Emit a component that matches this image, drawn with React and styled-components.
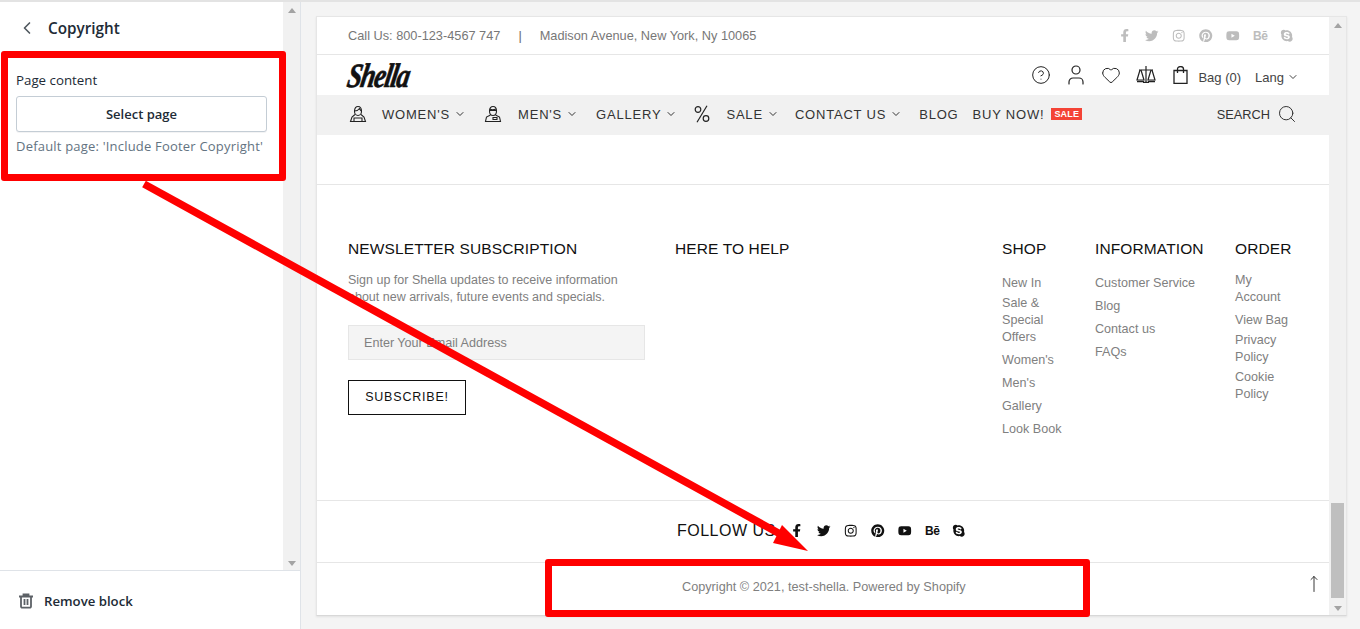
import React from "react";
import styled, { createGlobalStyle } from "styled-components";
import { ChevronLeft, ChevronDown, CircleHelp, User, Heart, Search, MoveUp } from "lucide-react";
import { FaFacebookF, FaTwitter, FaInstagram, FaPinterest, FaYoutube, FaSkype } from "react-icons/fa";

const Global = createGlobalStyle`
  html, body { margin: 0; padding: 0; height: 100%; overflow: hidden; background: #f4f4f4; }
  * { box-sizing: border-box; }
`;
const Page = styled.div`
  position: relative; width: 1360px; height: 629px; display: flex; background: #f4f4f4;
  border-top: 2px solid #e3e3e3; overflow: hidden;
`;
const Sidebar = styled.aside`
  width: 301px; height: 627px; background: #fff; border-right: 1px solid #dfe3e8;
  display: flex; flex-direction: column; font-family: "Open Sans", sans-serif; color: #212b36;
`;
const SideBody = styled.div`flex: 1; display: flex; min-height: 0;`;
const SideMain = styled.div`flex: 1; display: flex; flex-direction: column;`;
const SideHead = styled.div`
  height: 52px; display: flex; align-items: center; padding: 0 0 0 17px; gap: 11px;
  font-size: 15.3px; font-weight: 600; color: #212b36; svg { color: #50585f; }
`;
const SideSection = styled.div`padding: 16px 16px 0; display: flex; flex-direction: column;`;
const FieldLabel = styled.div`font-size: 13.3px; line-height: 20px; margin-bottom: 6px;`;
const SelectBtn = styled.button`
  height: 36px; border: 1px solid #c4cdd5; border-radius: 3px; background: #fff;
  font: 600 13px "Open Sans", sans-serif; color: #212b36; width: 251px; padding: 0;
  box-shadow: 0 1px 0 rgba(22,29,37,.05);
`;
const Help = styled.div`font-size: 13px; letter-spacing: .2px; line-height: 20px; color: #637381; margin-top: 4px; white-space: nowrap;`;
const Scrollbar = styled.div`
  width: ${p => p.$w}px; background: #f1f1f1; display: flex; flex-direction: column; justify-content: space-between;
  align-items: center; padding: 6px 0 4px; position: relative; flex: none;
`;
const ArrowUp = styled.i`width: 0; height: 0; border: 4px solid transparent; border-top: 0; border-bottom: 5px solid #a3a3a3;`;
const ArrowDown = styled.i`width: 0; height: 0; border: 4px solid transparent; border-bottom: 0; border-top: 5px solid #a3a3a3;`;
const Thumb = styled.div`position: absolute; left: 2px; right: 2px; bottom: 17px; height: 95px; background: #bfbfbf;`;
const SideFoot = styled.div`
  height: 59px; border-top: 1px solid #dfe3e8; display: flex; align-items: center; gap: 10px; padding: 2px 0 0 18px;
  font-size: 13.2px; font-weight: 600; color: #212b36;
`;
const Stage = styled.main`flex: 1; padding: 14px 0 0 15px;`;
const Frame = styled.div`
  width: 1031px; height: 600px; background: #fff; border: 1px solid #e6e6e6; border-bottom-color: #d8d8d8;
  display: flex; box-shadow: 0 1px 2px rgba(0,0,0,.08);
`;
const Shop = styled.div`flex: 1; font-family: "Liberation Sans", sans-serif; display: flex; flex-direction: column; min-width: 0;`;
const TopBar = styled.div`
  height: 38px; border-bottom: 1px solid #e6e6e6; padding: 0 35px 0 31px; display: flex; align-items: center;
  justify-content: space-between; font-size: 12.75px; color: #777;
`;
const Contact = styled.div`display: flex; align-items: center; white-space: nowrap;`;
const Sep = styled.span`margin: 0 18px; color: #666;`;
const Socials = styled.div`display: flex; align-items: center; gap: ${p => p.$gap}px; color: ${p => p.$color};`;
const Soc = styled.span`width: 14px; display: flex; justify-content: center; font-size: 13.5px;`;
const Behance = styled.span`font-size: 12px; font-weight: 700; width: 14px; line-height: 1; text-align: center; letter-spacing: -.5px;`;
const Header = styled.div`height: 40px; padding: 0 30px 0 31px; display: flex; align-items: center; justify-content: space-between;`;
const Logo = styled.div`
  font-family: "Liberation Serif", serif; font-style: italic; font-weight: 700; font-size: 31px; letter-spacing: -1.5px;
  color: #111; transform: skewX(-10deg) scale(.85, 1.1); transform-origin: left; line-height: 1;
  -webkit-text-stroke: .6px #111;
`;
const Tools = styled.div`display: flex; align-items: center; color: #222; font-size: 13px;`;
const Tool = styled.span`display: flex; width: 35px; justify-content: center; margin-top: -1px;`;
const Lang = styled.span`display: flex; align-items: center; gap: 3px; margin-left: 14px; color: #444; padding-top: 4px;`;
const Bag = styled.span`color: #444; padding-top: 4px;`;
const Nav = styled.nav`
  height: 40px; background: #f1f1f1; padding: 0 32px 2px 32px; display: flex; align-items: center;
  font-size: 13px; letter-spacing: 0.8px; color: #333; white-space: nowrap;
`;
const NavItem = styled.span`display: flex; align-items: center; gap: 4px; margin-right: ${p => p.$mr}px;`;
const NavIcon = styled.span`display: flex; margin-right: ${p => p.$mr}px; color: #222;`;
const SaleTag = styled.span`
  background: #f44336; color: #fff; font-size: 9px; font-weight: 700; line-height: 12px; padding: 0 3px; letter-spacing: .2px; margin-left: 3px;
`;
const SearchBox = styled.span`margin-left: auto; display: flex; align-items: center; gap: 7px; letter-spacing: 0; font-size: 12.8px;`;
const Spacer = styled.div`height: 50px; border-bottom: 1px solid #e6e6e6; flex: none;`;
const Columns = styled.div`
  height: 316px; border-bottom: 1px solid #e6e6e6; padding: 55px 0 0 31px; display: grid;
  grid-template-columns: 327px 327px 93px 140px 1fr; align-items: start;
`;
const Col = styled.div`display: flex; flex-direction: column;`;
const ColTitle = styled.h4`
  margin: 0; font-weight: 400; font-size: 15.5px; line-height: 18px; letter-spacing: .12px; color: #111; white-space: nowrap;
`;
const Para = styled.p`margin: 14px 0 0; font-size: 12.5px; line-height: 17px; color: #808080; width: 280px;`;
const EmailBox = styled.div`
  margin-top: 19px; width: 297px; height: 35px; background: #f4f4f4; border: 1px solid #e6e6e6;
  display: flex; align-items: center; padding-left: 15px; font-size: 12.6px; color: #808080;
`;
const SubBtn = styled.div`
  margin-top: 20px; width: 118px; height: 35px; border: 1px solid #111; display: flex; align-items: center; justify-content: center;
  font-size: 12.5px; letter-spacing: .8px; color: #111; padding-bottom: 2px;
`;
const Links = styled.ul`
  list-style: none; margin: ${p => p.$top}px 0 0; padding: 0; display: flex; flex-direction: column; gap: ${p => p.$gap}px;
`;
const Link = styled.li`font-size: 12.6px; line-height: 17px; color: #808080; width: ${p => p.$w}px; margin-bottom: ${p => p.$after || 0}px;`;
const Follow = styled.div`
  height: 62px; border-bottom: 1px solid #e6e6e6; display: flex; align-items: center; padding: 0 0 2px 360px; gap: 13px;
`;
const FollowText = styled.span`font-size: 16px; letter-spacing: .5px; color: #111; white-space: nowrap; width: 100px;`;
const Copy = styled.div`
  flex: 1; display: flex; align-items: center; position: relative; font-size: 12.7px; color: #808080; padding-left: 365px; padding-bottom: 4px;
`;
const TopLink = styled.span`position: absolute; right: 6px; top: 12px; display: flex; color: #222;`;
const RedBox = styled.div`
  position: absolute; left: ${p => p.$x}px; top: ${p => p.$y}px; width: ${p => p.$w}px; height: ${p => p.$h}px;
  border: 7px solid #ff0000; border-radius: 3px; pointer-events: none;
`;
const Overlay = styled.svg`position: absolute; left: 0; top: -2px; pointer-events: none;`;

const Woman = () => (
  <svg width="18" height="18" viewBox="0 0 18 18" fill="none" stroke="#222" strokeWidth="1.1">
    <path d="M5.500 6.500C5.500 3 7 1.500 9 1.500s3.500 1.500 3.500 5c0 2-1.500 4-3.500 4s-3.500-2-3.500-4z" />
    <path d="M5.500 6c2 0 4-1 5-2.500.5 1 1.200 2 2 2.500" />
    <path d="M6 9.500 3 12l-1.500 4.500h15L15 12l-3-2.500" />
    <path d="M5 13h8v3.500H5z" />
  </svg>
);
const Man = () => (
  <svg width="18" height="18" viewBox="0 0 18 18" fill="none" stroke="#222" strokeWidth="1.1">
    <path d="M5.500 6C5.500 3 7 1.500 9 1.500s3.500 1.500 3.500 4.500-1.500 4.500-3.500 4.500S5.500 9 5.500 6z" />
    <path d="M5.500 5.500h7M6 4c1 .8 4 .8 6 0" />
    <path d="M6.500 10 2.500 12l-1 4.500h15l-1-4.500-4-2" />
    <path d="M9 12.500h4v2H9z" />
  </svg>
);
const PercentIcon = () => (
  <svg width="16" height="18" viewBox="0 0 16 18" fill="none" stroke="#222" strokeWidth="1.2">
    <path d="M13 .8 3 17.200" />
    <circle cx="4" cy="4.500" r="2.800" />
    <circle cx="12" cy="13.500" r="2.800" />
  </svg>
);
const ScaleIcon = () => (
  <svg width="20" height="18" viewBox="0 0 20 18" fill="none" stroke="#222" strokeWidth="1.2">
    <path d="M10 0v16M3 4h14M7 16.400h6" />
    <path d="M4 4 1 14h7L5 4M15 4l-3 10h7l-3-10" />
    <path d="M1 15.500h7M12 15.500h7" strokeWidth="1.600" />
  </svg>
);
const BagIcon = () => (
  <svg width="15" height="18" viewBox="0 0 15 18" fill="none" stroke="#222" strokeWidth="1.3">
    <path d="M1 4.500h13v12.800H1z" />
    <path d="M4.500 7V3a3 2.400 0 0 1 6 0v4" />
  </svg>
);
const TrashIcon = () => (
  <svg width="16" height="16" viewBox="0 0 16 16" fill="none" stroke="#5c6166" strokeWidth="1.800">
    <path d="M1 3.500h14M5.500 3V1.500h5V3" />
    <path d="M3 4v9.500a1.200 1.200 0 0 0 1.200 1.200h7.600a1.200 1.200 0 0 0 1.200-1.200V4" />
    <path d="M6.500 6v6M9.500 6v6" />
  </svg>
);
const Chev = () => <ChevronDown size={12} strokeWidth={2} />;
const socialIcons = [FaFacebookF, FaTwitter, FaInstagram, FaPinterest, FaYoutube, "be", FaSkype];
const SocialRow = ({ color, gap }) => (
  <Socials $color={color} $gap={gap}>
    {socialIcons.map((I, i) => I === "be" ? <Behance key={i}>Bē</Behance> : <Soc key={i}><I /></Soc>)}
  </Socials>
);

export default function App() {
  return (
    <>
      <Global />
      <Page>
        <Sidebar>
          <SideBody>
            <SideMain>
              <SideHead><ChevronLeft size={20} strokeWidth={2} />Copyright</SideHead>
              <SideSection>
                <FieldLabel>Page content</FieldLabel>
                <SelectBtn>Select page</SelectBtn>
                <Help>Default page: 'Include Footer Copyright'</Help>
              </SideSection>
            </SideMain>
            <Scrollbar $w={17}><ArrowUp /><ArrowDown /></Scrollbar>
          </SideBody>
          <SideFoot><TrashIcon />Remove block</SideFoot>
        </Sidebar>
        <Stage>
          <Frame>
            <Shop>
              <TopBar>
                <Contact>Call Us: 800-123-4567 747<Sep>|</Sep>Madison Avenue, New York, Ny 10065</Contact>
                <SocialRow color="#bdbdbd" gap={13} />
              </TopBar>
              <Header>
                <Logo>Shella</Logo>
                <Tools>
                  <Tool><CircleHelp size={20} strokeWidth={1.2} /></Tool>
                  <Tool><User size={24} strokeWidth={1.2} /></Tool>
                  <Tool><Heart size={20} strokeWidth={1.2} /></Tool>
                  <Tool><ScaleIcon /></Tool>
                  <Tool><BagIcon /></Tool>
                  <Bag>Bag (0)</Bag>
                  <Lang>Lang <Chev /></Lang>
                </Tools>
              </Header>
              <Nav>
                <NavIcon $mr={15}><Woman /></NavIcon>
                <NavItem $mr={18}>WOMEN'S <Chev /></NavItem>
                <NavIcon $mr={16}><Man /></NavIcon>
                <NavItem $mr={18}>MEN'S <Chev /></NavItem>
                <NavItem $mr={17}>GALLERY <Chev /></NavItem>
                <NavIcon $mr={16}><PercentIcon /></NavIcon>
                <NavItem $mr={16}>SALE <Chev /></NavItem>
                <NavItem $mr={17}>CONTACT US <Chev /></NavItem>
                <NavItem $mr={14}>BLOG</NavItem>
                <NavItem $mr={0}>BUY NOW!<SaleTag>SALE</SaleTag></NavItem>
                <SearchBox>SEARCH <Search size={20} strokeWidth={1.2} /></SearchBox>
              </Nav>
              <Spacer />
              <Columns>
                <Col>
                  <ColTitle>NEWSLETTER SUBSCRIPTION</ColTitle>
                  <Para>Sign up for Shella updates to receive information about new arrivals, future events and specials.</Para>
                  <EmailBox>Enter Your Email Address</EmailBox>
                  <SubBtn>SUBSCRIBE!</SubBtn>
                </Col>
                <Col><ColTitle>HERE TO HELP</ColTitle></Col>
                <Col>
                  <ColTitle>SHOP</ColTitle>
                  <Links $top={17} $gap={6}>
                    <Link $w={60} $after={-3}>New In</Link>
                    <Link $w={60}>Sale &amp; Special Offers</Link>
                    <Link $w={60}>Women's</Link>
                    <Link $w={60}>Men's</Link>
                    <Link $w={60}>Gallery</Link>
                    <Link $w={70}>Look Book</Link>
                  </Links>
                </Col>
                <Col>
                  <ColTitle>INFORMATION</ColTitle>
                  <Links $top={17} $gap={6}>
                    <Link $w={120}>Customer Service</Link>
                    <Link $w={120}>Blog</Link>
                    <Link $w={120}>Contact us</Link>
                    <Link $w={120}>FAQs</Link>
                  </Links>
                </Col>
                <Col>
                  <ColTitle>ORDER</ColTitle>
                  <Links $top={14} $gap={3}>
                    <Link $w={50} $after={3}>My Account</Link>
                    <Link $w={60}>View Bag</Link>
                    <Link $w={50}>Privacy Policy</Link>
                    <Link $w={50}>Cookie Policy</Link>
                  </Links>
                </Col>
              </Columns>
              <Follow>
                <FollowText>FOLLOW US</FollowText>
                <SocialRow color="#111" gap={13} />
              </Follow>
              <Copy>
                Copyright © 2021, test-shella. Powered by Shopify
                <TopLink><MoveUp size={18} strokeWidth={1.2} /></TopLink>
              </Copy>
            </Shop>
            <Scrollbar $w={17}><ArrowUp /><Thumb /><ArrowDown /></Scrollbar>
          </Frame>
        </Stage>
        <RedBox $x={1} $y={49} $w={285} $h={130} />
        <RedBox $x={545} $y={557} $w={545} $h={58} />
        <Overlay width="1360" height="629" viewBox="0 0 1360 629">
          <path d="M144 184 L782 535" stroke="#ff0000" strokeWidth="7.500" fill="none" />
          <polygon points="808,551 773,543 782,525" fill="#ff0000" />
        </Overlay>
      </Page>
    </>
  );
}
